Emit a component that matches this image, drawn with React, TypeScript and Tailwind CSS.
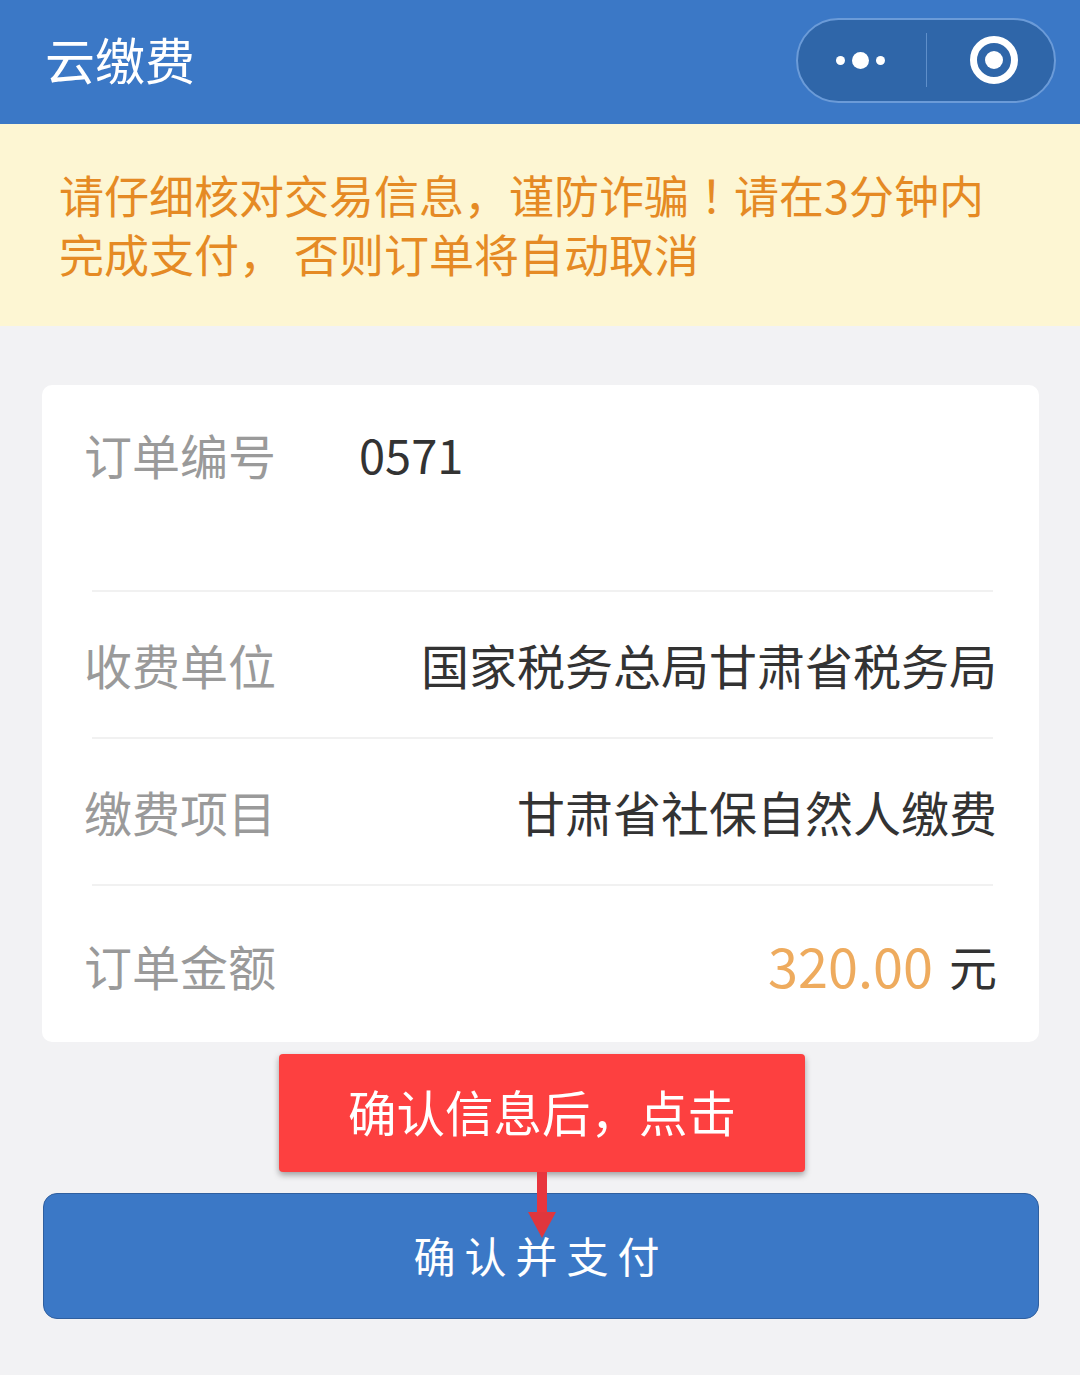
const font = { fontFamily: '"Noto Sans CJK SC", "Noto Sans", sans-serif' };

function Row({ label, children, className }: { label: string; children: React.ReactNode; className: string }) {
  return (
    <div className={`flex justify-between ${className}`}>
      <span className="text-[48px] leading-[60px] text-[#9a9a9a]">{label}</span>
      {children}
    </div>
  );
}

function Divider() {
  return <div className="ml-[8px] mr-[4px] h-[2px] bg-[#f1f1f1]" />;
}

export default function App() {
  return (
    <div style={font} className="relative h-[1375px] w-[1080px] overflow-hidden bg-[#f2f2f4]">
      {/* Nav bar */}
      <header className="flex h-[124px] items-center justify-between bg-[#3b78c6] pb-[4px] pl-[45px] pr-[24px]">
        <h1 className="mb-[5px] text-[50px] leading-[60px] font-normal text-white">云缴费</h1>
        <div className="flex h-[85px] w-[260px] items-center rounded-full border-2 border-[#6b9bd8] bg-[#2f66a9]">
          <div className="flex h-full w-[128px] items-center justify-center gap-[7px] pr-[4px]">
            <span className="h-[9px] w-[9px] rounded-full bg-white" />
            <span className="h-[17px] w-[17px] rounded-full bg-white" />
            <span className="h-[9px] w-[9px] rounded-full bg-white" />
          </div>
          <div className="h-[54px] w-px bg-[#5f8fca]" />
          <div className="flex flex-1 items-center justify-center pl-[7px]">
            <div className="flex h-[48px] w-[48px] items-center justify-center rounded-full border-[7px] border-white">
              <span className="h-[18px] w-[18px] rounded-full bg-white" />
            </div>
          </div>
        </div>
      </header>

      {/* Warning */}
      <div className="h-[202px] bg-[#fdf6d3] pl-[59px] pr-[60px] pt-[41px] text-[45px] leading-[59px] text-[#e58a24]">
        <p className="whitespace-nowrap">
          请仔细核对交易信息，谨防诈骗
          <span style={{ fontFamily: '"Noto Sans CJK TC", sans-serif' }}>！</span>
          请在3分钟内
        </p>
        <p className="whitespace-nowrap">完成支付， 否则订单将自动取消</p>
      </div>

      {/* Order card */}
      <div className="ml-[42px] mt-[59px] h-[657px] w-[997px] rounded-[10px] bg-white px-[42px]">
        <Row label="订单编号" className="h-[205px] justify-start pt-[39px]">
          <span className="ml-[83px] text-[47px] leading-[60px] text-[#333]">0571</span>
        </Row>
        <Divider />
        <Row label="收费单位" className="h-[145px] items-center pb-[2px]">
          <span className="text-[48px] leading-[60px] text-[#333]">国家税务总局甘肃省税务局</span>
        </Row>
        <Divider />
        <Row label="缴费项目" className="h-[145px] items-center pb-[2px]">
          <span className="text-[48px] leading-[60px] text-[#333]">甘肃省社保自然人缴费</span>
        </Row>
        <Divider />
        <Row label="订单金额" className="h-[156px] items-center pt-[2px]">
          <span className="flex items-center text-[48px] leading-[60px] text-[#333]">
            <span className="mr-[16px] text-[54px] text-[#eeab5e]">320.00</span>元
          </span>
        </Row>
      </div>

      {/* Submit */}
      <button className="mx-[43px] mt-[151px] flex h-[126px] w-[996px] items-center justify-center rounded-[14px] border border-[#2f5f9f] bg-[#3b78c6] pb-[4px] text-[42px] tracking-[9px] text-white">
        确认并支付
      </button>

      {/* Annotation over the button */}
      <div className="absolute left-[279px] top-[1054px] flex h-[118px] w-[526px] items-center justify-center rounded-[4px] bg-[#fd4040] pb-[4px] text-[48.5px] text-white shadow-[0_3px_6px_rgba(0,0,0,0.35)]">
        确认信息后，点击
      </div>
      <svg className="absolute left-[526px] top-[1172px]" width="32" height="68" viewBox="0 0 32 68">
        <path d="M11 0h10v42H11z" fill="#e8353d" />
        <path d="M2 40h28L16 66z" fill="#e0363d" />
      </svg>
    </div>
  );
}
